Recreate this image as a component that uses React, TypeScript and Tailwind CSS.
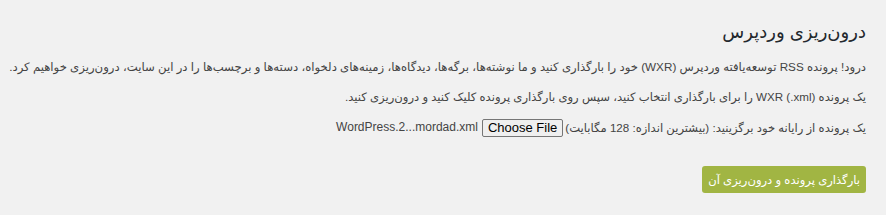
export default function App() {
  return (
    <div
      dir="rtl"
      className="min-h-[215px] bg-[#f1f1f1] text-[#444] pr-5 pl-2 pt-5"
      style={{ fontFamily: '"Liberation Sans", "DejaVu Sans", Tahoma, sans-serif' }}
    >
      {/* عنوان */}
      <h2 className="text-[18px] leading-[24px] font-normal text-[#23282d] mb-[13px]">
        درون‌ریزی وردپرس
      </h2>

      <p className="text-[11.7px] leading-[19px] mb-[11px] whitespace-nowrap">
        درود! پرونده RSS توسعه‌یافته وردپرس (WXR) خود را بارگذاری کنید و ما نوشته‌ها، برگه‌ها، دیدگاه‌ها، زمینه‌های دلخواه، دسته‌ها و برچسب‌ها را در این سایت، درون‌ریزی خواهیم کرد.
      </p>
      <p className="text-[11.6px] leading-[19px] mb-[12px]">
        یک پرونده (xml.) WXR را برای بارگذاری انتخاب کنید، سپس روی بارگذاری پرونده کلیک کنید و درون‌ریزی کنید.
      </p>

      {/* انتخاب پرونده */}
      <div className="flex items-center text-[11.6px] leading-[19px]">
        <span>یک پرونده از رایانه خود برگزینید: (بیشترین اندازه: 128 مگابایت)</span>
        <button
          type="button"
          className="mr-[2px] h-[18px] px-[5px] border border-[#767676] rounded-[2px] bg-[#efefef] text-[#000] text-[13px] leading-[16px]"
          style={{ fontFamily: 'Arial, "Liberation Sans", sans-serif' }}
        >
          Choose File
        </button>
        <span className="mr-1 text-[12px]" dir="ltr">WordPress.2...mordad.xml</span>
      </div>

      <div className="mt-[29px] flex">
        <button
          type="button"
          className="h-[27px] px-[6px] rounded-[3px] bg-[#a1b543] text-white text-[11.6px] leading-[25px]"
        >
          بارگذاری پرونده و درون‌ریزی آن
        </button>
      </div>
    </div>
  );
}
